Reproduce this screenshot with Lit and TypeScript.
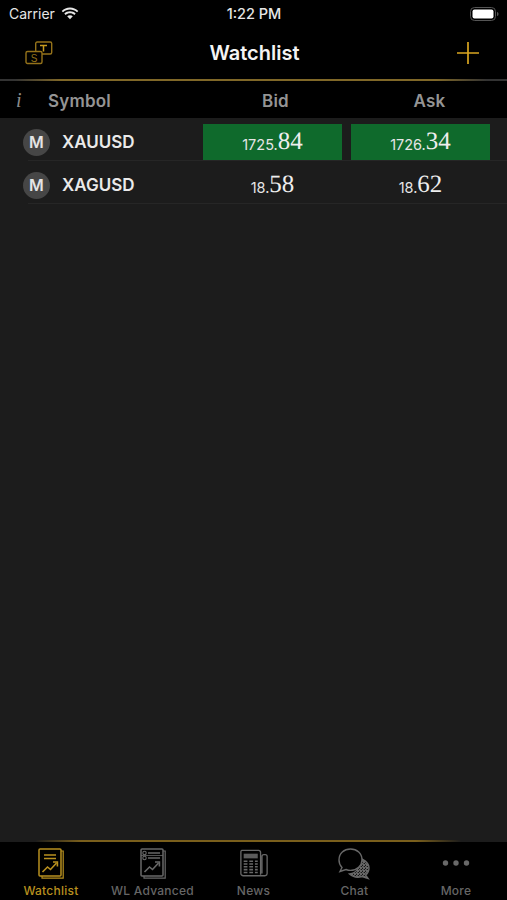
import { LitElement, html, css, svg } from "lit";
import { customElement } from "lit/decorators.js";

const GOLD = "#b8901f";
const GREY = "#686868";

const docIcon = (c: string, top: unknown) => html`<svg class="tabicon" width="30" height="32" viewBox="0 0 30 32" fill="none" stroke=${c} stroke-width="1.5">
  <path d="M25 3h2.2v27.2H6V28" stroke-width="1.2"/>
  <rect x="3" y="1" width="22" height="27" rx="1"/>
  ${top}
  <path d="M6.5 24l5-5 3 2.5 6-6.5" stroke-width="1.6"/>
  <path d="M17 14h4.4v4.4" stroke-width="1.6"/>
</svg>`;

const tabs = [
  { label: "Watchlist", active: true, icon: docIcon(GOLD, svg`<path d="M8 7h12M8 10.500h12" stroke-width="1.5"/>`) },
  { label: "WL Advanced", active: false, icon: docIcon(GREY, svg`<circle cx="6.5" cy="5" r="1.7" stroke-width="1.1"/><circle cx="6.5" cy="10" r="1.7" stroke-width="1.1"/><path d="M10 5h12M10 10h12" stroke-width="1.3"/><path d="M3 7.5h22" stroke-width="0.8"/>`) },
  { label: "News", active: false, icon: html`<svg class="tabicon" width="30" height="32" viewBox="0 0 32 32" fill="none" stroke=${GREY} stroke-width="1.4">
      <path d="M23 27.5V3.5a2 2 0 0 0-2-2H3a1.5 1.5 0 0 0-1 1.500v23a2.500 2.500 0 0 0 2.500 2.500H28a2.500 2.500 0 0 0 2-2.500V8a2 2 0 0 0-2-2h-1.500a2 2 0 0 0-2 2v18" />
      <rect x="5" y="5" width="15" height="5" fill="#5c5c5c" stroke="none"/>
      <path d="M5 13h4M5 16h4M5 19h4M5 22h4M5 25h4M11 13h4M11 16h4M11 19h4M11 22h4M11 25h4M17 13h3M17 16h3M17 19h3M17 22h3M17 25h3" stroke-width="1.700"/>
    </svg>` },
  { label: "Chat", active: false, icon: html`<svg class="tabicon" width="33" height="32" viewBox="0 0 33 32" fill="none" stroke=${GREY} stroke-width="1.4">
      <defs><pattern id="hatch" width="3" height="3" patternUnits="userSpaceOnUse"><rect width="1" height="1" fill=${GREY}/><rect x="1.500" y="1.500" width="1" height="1" fill=${GREY}/></pattern></defs>
      <path d="M20 10c5 .5 11 4.500 11 10 0 3-1.300 5.500-3.500 7l2.500 3.500-6-2c-5 1.500-9 .5-12.500-2.500 7-1 12-7 8.500-16z" fill="url(#hatch)"/>
      <path d="M12.500 1C6 1 1 5.500 1 12c0 3 1 5.500 3 7.500L2 23.500l6-2c1.500.6 3 .9 4.500.9C19 22.400 24 17.500 24 11.700 24 5.500 19 1 12.500 1z" fill="#000"/>
    </svg>` },
  { label: "More", active: false, icon: html`<svg class="tabicon" width="28" height="32" viewBox="0 0 28 32" fill=${GREY}>
      <circle cx="3.500" cy="15" r="2.700"/><circle cx="14" cy="15" r="2.700"/><circle cx="24.500" cy="15" r="2.700"/>
    </svg>` },
];

const rows = [
  { sym: "XAUUSD", bid: ["1725.", "84"], ask: ["1726.", "34"], up: true },
  { sym: "XAGUSD", bid: ["18.", "58"], ask: ["18.", "62"], up: false },
];

@customElement("app-root")
export class AppRoot extends LitElement {
  static styles = css`
    :host { display: flex; flex-direction: column; height: 900px; width: 507px; overflow: hidden; background: #1c1c1c; font-family: Inter, "Liberation Sans", sans-serif; color: #fff; }
    .top { background: #000; height: 118px; display: flex; flex-direction: column; flex: none; }
    .status { height: 27px; display: grid; grid-template-columns: 1fr auto 1fr; align-items: center; padding: 0 8px 0 9px; font-size: 14px; color: #e6e6e6; }
    .status .l { display: flex; align-items: center; gap: 6px; }
    .status .r { display: flex; justify-content: flex-end; }
    .status .time { font-weight: 500; font-size: 14.5px; }
    .nav { height: 52px; display: flex; align-items: center; justify-content: space-between; padding: 0 28px 0 25px; }
    .nav .title { font-size: 20px; font-weight: 600; color: #f4f4f4; margin-left: -1px; }
    .rule { height: 2px; flex: none; background: linear-gradient(90deg, #333 0%, #333 3%, #806828 12%, #806828 86%, #333 96%, #333 100%); }
    .head { flex: 1; display: grid; grid-template-columns: 48px 158px 140px 1fr; align-items: center; padding-top: 2px; font-size: 17px; font-weight: 600; letter-spacing: .2px; color: #949494; }
    .head .i { font: italic 400 20px "Liberation Serif", serif; padding-left: 16px; color: #8a8a8a; }
    .head .c { text-align: center; }
    .head .bid { margin-left: -1px; }
    .head .ask { padding-left: 6px; }
    .list { flex: 1; }
    .row { display: grid; grid-template-columns: 36px 144px 139px 148px; align-items: center; height: 43px; padding: 5px 0 0 23px; box-sizing: border-box; position: relative; }
    .row::after { content: ""; position: absolute; left: 28px; right: 0; bottom: 0; height: 1px; background: #262626; }
    .m { width: 27px; height: 27px; border-radius: 50%; background: #464646; display: flex; align-items: center; justify-content: center; font-size: 16px; font-weight: 600; color: #e4e4e4; }
    .sym { padding-left: 3px; font-size: 17px; font-weight: 600; color: #eaeaea; }
    .cell { height: 36px; display: flex; align-items: center; justify-content: center; }
    .cell + .cell { margin-left: 9px; width: 139px; }
    .cell.up { background: #0f6a2c; }
    .small { font-size: 14.5px; color: #e6e6e6; margin-top: 5px; }
    .big { font: 25px "Liberation Serif", serif; color: #eeeeee; text-rendering: geometricPrecision; }
    .tabs { height: 60px; flex: none; background: #000; display: flex; flex-direction: column; }
    .tabs .rule { background: linear-gradient(90deg, #1c1c1c 0%, #1c1c1c 7%, #7a5f1c 16%, #7a5f1c 82%, #1c1c1c 91%, #1c1c1c 100%); }
    .tabrow { flex: 1; display: grid; grid-template-columns: 102px 101px 101px 101px 102px; }
    .tab { display: flex; flex-direction: column; align-items: center; padding-top: 6px; font-size: 12px; font-weight: 500; color: #666; }
    .tab.active { color: #b8901f; }
    .tabicon { height: 32px; flex: none; }
    .tab span { margin-top: 4px; line-height: 14px; letter-spacing: .25px; }
  `;

  render() {
    return html`
      <div class="top">
        <div class="status">
          <div class="l">
            <span>Carrier</span>
            <svg width="18" height="13" viewBox="0 0 18 13" fill="#e6e6e6"><path d="M9 2.500c2.700 0 5.100 1 7 2.800l1.300-1.400C15.100 1.700 12.200.4 9 .4S2.900 1.700.7 3.900L2 5.300c1.900-1.800 4.300-2.800 7-2.800z"/><path d="M9 6.200c1.700 0 3.200.6 4.400 1.700l1.300-1.400C13.200 5 11.200 4.200 9 4.200S4.800 5 3.300 6.500l1.300 1.400C5.800 6.800 7.300 6.200 9 6.200z"/><path d="M9 8.200c-1.100 0-2.100.4-2.800 1.100L9 12.300l2.800-3c-.7-.7-1.700-1.100-2.800-1.100z"/></svg>
          </div>
          <div class="time">1:22 PM</div>
          <div class="r">
            <svg width="29" height="14" viewBox="0 0 29 14"><rect x=".5" y=".5" width="25" height="13" rx="4" fill="none" stroke="#555"/><rect x="2.500" y="2.500" width="21" height="9" rx="2" fill="#fff"/><path d="M27 5v4c1 0 1.500-1 1.500-2S28 5 27 5z" fill="#555"/></svg>
          </div>
        </div>
        <div class="nav">
          <svg width="28" height="24" viewBox="0 0 28 24" fill="none" stroke="#94721a" stroke-width="1.400">
            <rect x="10.700" y="1" width="16" height="12" rx="1.500"/>
            <path d="M15 4.500h7M18.500 4.500v6" stroke="#c79a1e" stroke-width="1.500"/>
            <rect x="1" y="10.500" width="16" height="12" rx="1.500" fill="#000"/>
            <text x="9" y="20.500" text-anchor="middle" font-family="Liberation Sans" font-size="10" fill="#94721a" stroke="none">S</text>
          </svg>
          <div class="title">Watchlist</div>
          <svg width="22" height="22" viewBox="0 0 22 22" stroke="#d9a520" stroke-width="1.700"><path d="M0 11h22M11 0v22"/></svg>
        </div>
        <div class="rule"></div>
        <div class="head">
          <div class="i">i</div>
          <div>Symbol</div>
          <div class="c bid">Bid</div>
          <div class="c ask">Ask</div>
        </div>
      </div>
      <div class="list">
        ${rows.map((r) => html`
          <div class="row">
            <div class="m">M</div>
            <div class="sym">${r.sym}</div>
            <div class="cell ${r.up ? "up" : ""}"><span class="small">${r.bid[0]}</span><span class="big">${r.bid[1]}</span></div>
            <div class="cell ${r.up ? "up" : ""}"><span class="small">${r.ask[0]}</span><span class="big">${r.ask[1]}</span></div>
          </div>`)}
      </div>
      <div class="tabs">
        <div class="rule"></div>
        <div class="tabrow">
          ${tabs.map((t) => html`<div class="tab ${t.active ? "active" : ""}">${t.icon}<span>${t.label}</span></div>`)}
        </div>
      </div>
    `;
  }
}
